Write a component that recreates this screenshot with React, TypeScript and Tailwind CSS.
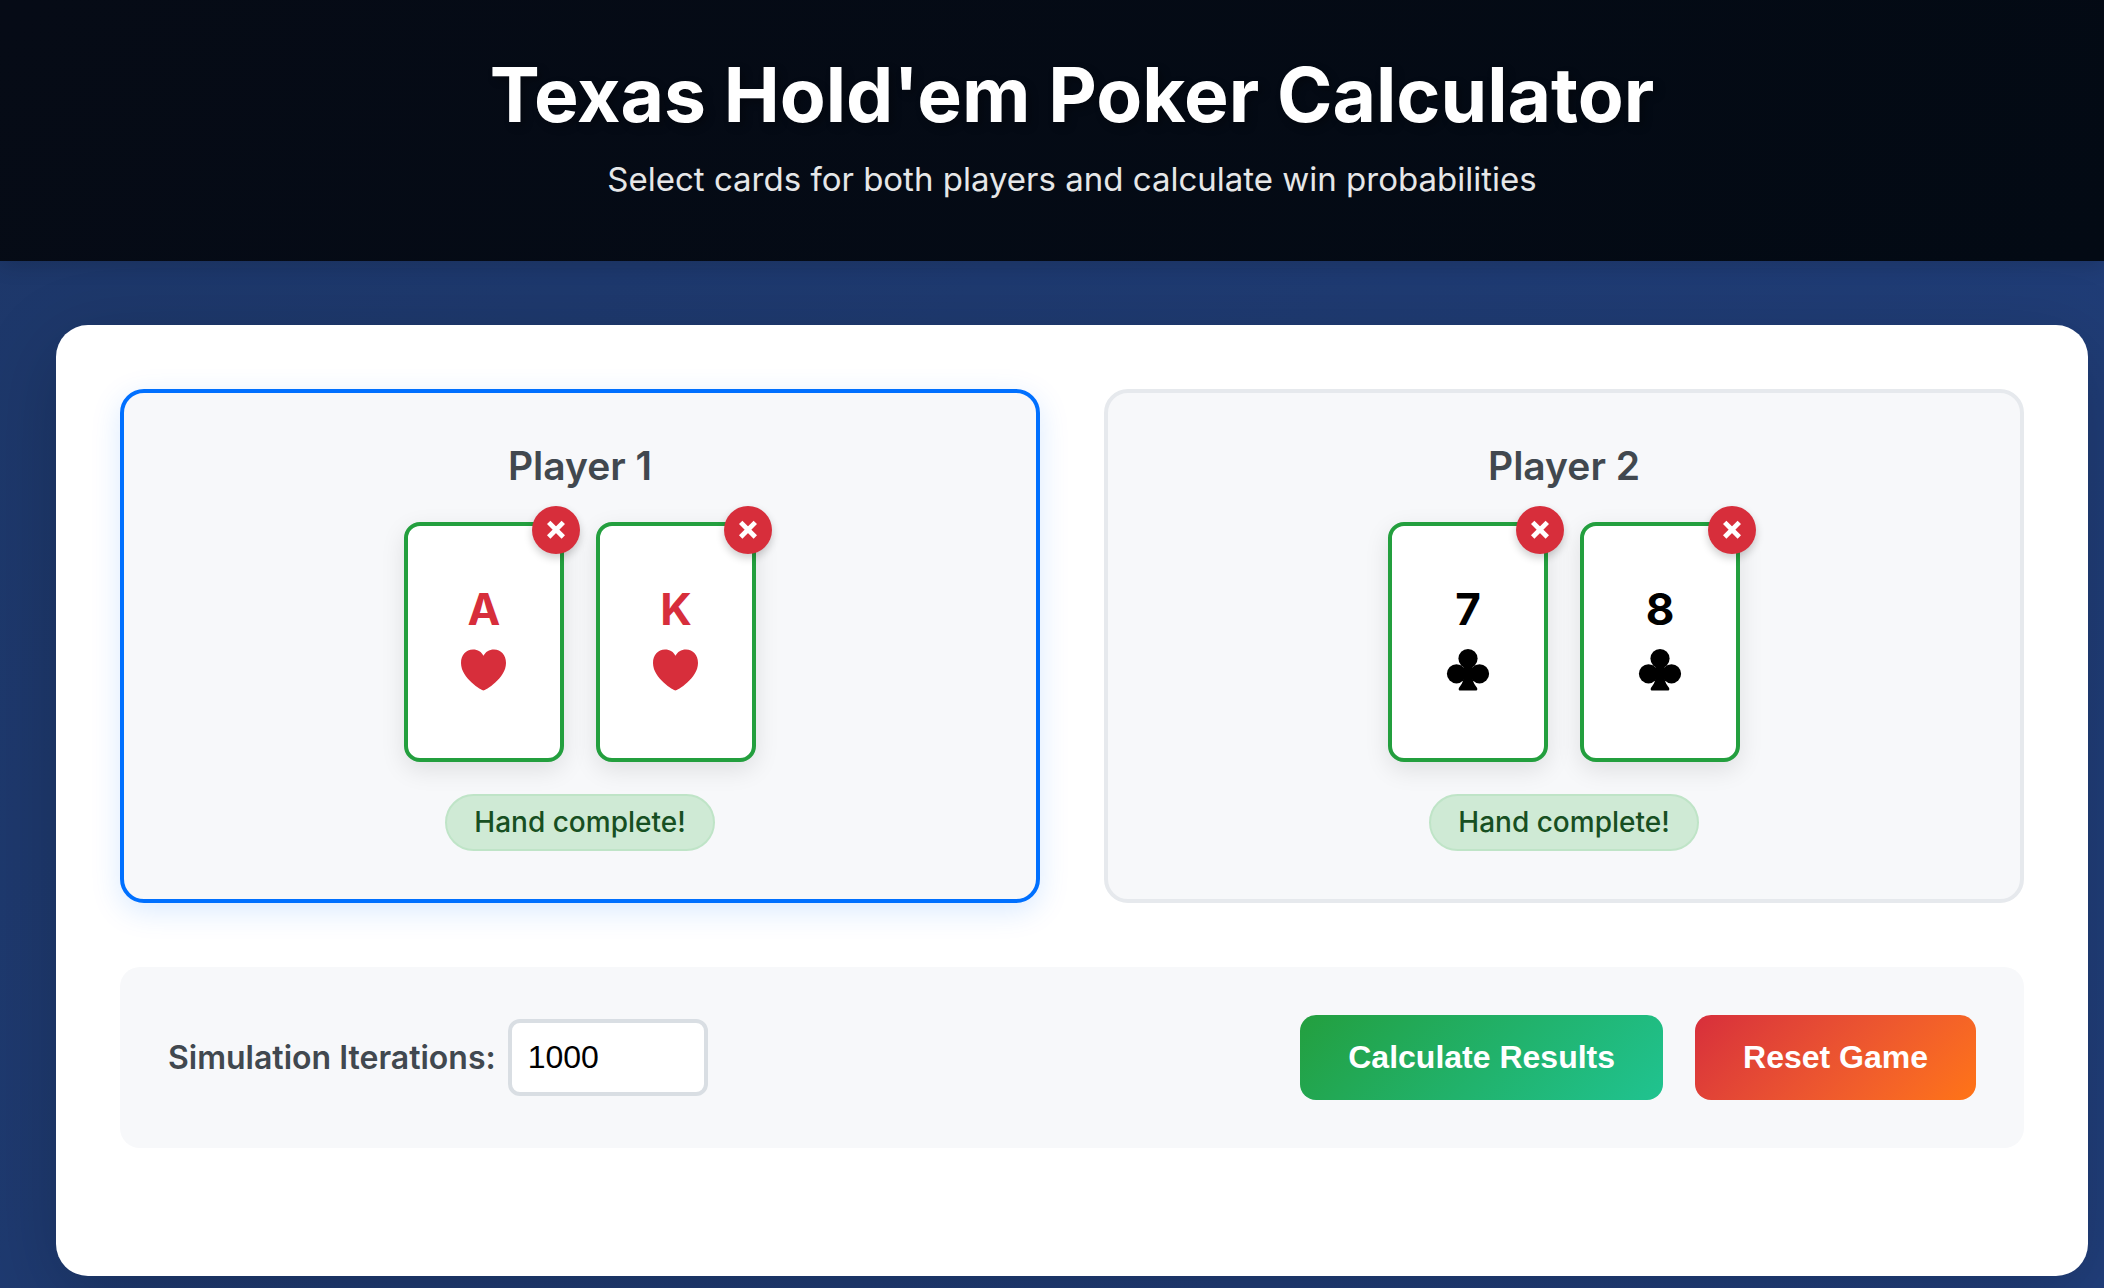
import React, { useState } from 'react'

type Suit = 'hearts' | 'clubs'

interface Card {
  rank: string
  suit: Suit
}

interface Player {
  id: number
  name: string
  cards: Card[]
}

const players: Player[] = [
  { id: 1, name: 'Player 1', cards: [{ rank: 'A', suit: 'hearts' }, { rank: 'K', suit: 'hearts' }] },
  { id: 2, name: 'Player 2', cards: [{ rank: '7', suit: 'clubs' }, { rank: '8', suit: 'clubs' }] }
]

const SuitIcon: React.FC<{ suit: Suit }> = ({ suit }) => (
  <svg viewBox="0 0 56 56" className="size-14" fill="currentColor" aria-hidden="true">
    {suit === 'hearts' ? (
      <path d="M27.5 49.5C26 49.5 5 37.5 5 22C5 14 10 8.5 17 8.5C22 8.5 25.5 10.8 27.5 14.8C29.5 10.8 33 8.5 38 8.5C45 8.5 50 14 50 22C50 37.5 29 49.5 27.5 49.5Z" />
    ) : (
      <>
        <circle cx="28" cy="17.6" r="9.6" />
        <circle cx="16.5" cy="32.8" r="9.6" />
        <circle cx="39.5" cy="32.8" r="9.6" />
        <path d="M23 23H33L32 29L34 37H32.5C33 41.4 34.8 44 36.8 46.4C38 48 37.2 49.6 35.5 49.6H20.5C18.8 49.6 18 48 19.2 46.4C21.2 44 23 41.4 23.5 37H22L24 29Z" />
      </>
    )}
  </svg>
)

const PlayingCard: React.FC<{ card: Card; onRemove?: () => void }> = ({ card, onRemove }) => (
  <div
    className={`relative flex h-60 w-40 flex-col items-center justify-center gap-2.5 rounded-2xl border-4 border-[#239f3e] bg-white shadow-[0_8px_24px_rgba(0,0,0,0.1)] ${
      card.suit === 'hearts' ? 'text-[#d72e3b]' : 'text-black'
    }`}
  >
    <span className="text-[44px] leading-[44px] font-bold">{card.rank}</span>
    <SuitIcon suit={card.suit} />
    <button
      type="button"
      onClick={onRemove}
      aria-label={`Remove ${card.rank} of ${card.suit}`}
      className="absolute -top-5 -right-5 flex size-12 items-center justify-center rounded-full bg-[#d72e3b] text-white shadow-[0_4px_8px_rgba(0,0,0,0.2)]"
    >
      <svg viewBox="0 0 20 20" className="size-5" stroke="currentColor" strokeWidth="4.8" aria-hidden="true">
        <path d="M2.7 2.4L17.3 17M17.3 2.4L2.7 17" />
      </svg>
    </button>
  </div>
)

const PlayerPanel: React.FC<{ player: Player; active: boolean; onSelect: () => void }> = ({
  player,
  active,
  onSelect
}) => (
  <section
    onClick={onSelect}
    className={`flex flex-col items-center rounded-3xl border-4 bg-[#f7f8fa] py-12 ${
      active ? 'border-[#0070ff] shadow-[0_8px_30px_rgba(0,112,255,0.15)]' : 'border-[#e6e9ed]'
    }`}
  >
    <h2 className="text-[39px] leading-[49px] font-semibold text-[#41484f]">{player.name}</h2>
    <div className="mt-8 flex gap-8">
      {player.cards.map((card) => (
        <PlayingCard key={card.rank + card.suit} card={card} />
      ))}
    </div>
    <p className="mt-8 rounded-full border-2 border-[#bfe4c7] bg-[#cfead5] px-[27px] text-[28px] leading-[53px] font-medium text-[#174f22]">
      Hand complete!
    </p>
  </section>
)

export default function App() {
  const [activePlayer, setActivePlayer] = useState(1)
  const [iterations, setIterations] = useState('1000')

  return (
    <div className="min-h-screen bg-linear-135 from-[#1d3769] to-[#213f7c] font-[Inter,sans-serif]">
      <header className="bg-linear-135 from-[#060b16] to-[#030a14] pt-12 pb-15 pl-10 text-center shadow-[0_4px_20px_rgba(0,0,0,0.15)]">
        <h1 className="text-[75px] leading-[94px] font-bold text-white text-shadow-[4px_4px_8px_rgba(0,0,0,0.3)]">
          Texas Hold'em Poker Calculator
        </h1>
        <p className="mt-4 text-[33px] leading-[43px] text-[#e6e7e8]">
          Select cards for both players and calculate win probabilities
        </p>
      </header>

      <div className="pt-16 pr-4 pb-3 pl-14">
        <main className="rounded-[32px] bg-white px-16 pt-16 pb-32 shadow-[0_20px_80px_rgba(0,0,0,0.2)]">
          <div className="grid grid-cols-2 gap-16">
            {players.map((player) => (
              <PlayerPanel
                key={player.id}
                player={player}
                active={player.id === activePlayer}
                onSelect={() => setActivePlayer(player.id)}
              />
            ))}
          </div>

          {/* Simulation controls */}
          <div className="mt-16 flex items-center justify-between rounded-[20px] bg-[#f7f8fa] p-12">
            <div className="flex items-center gap-3">
              <label htmlFor="iterations" className="text-[32px] leading-10 font-semibold text-[#41484f]">
                Simulation Iterations:
              </label>
              <input
                id="iterations"
                type="text"
                inputMode="numeric"
                value={iterations}
                onChange={(e) => setIterations(e.target.value)}
                className="h-[77px] w-[200px] rounded-xl border-4 border-[#d9dee3] bg-white px-4 font-['Liberation_Sans',sans-serif] text-[32px] text-black"
              />
            </div>
            <div className="flex gap-8 font-['Liberation_Sans',sans-serif] text-[32px] leading-[37px] font-bold text-white">
              <button type="button" className="rounded-2xl bg-linear-135 from-[#239f3e] to-[#20c390] px-12 py-6">
                Calculate Results
              </button>
              <button type="button" className="rounded-2xl bg-linear-135 from-[#d72e3b] to-[#ff7415] px-12 py-6">
                Reset Game
              </button>
            </div>
          </div>
        </main>
      </div>
    </div>
  )
}
